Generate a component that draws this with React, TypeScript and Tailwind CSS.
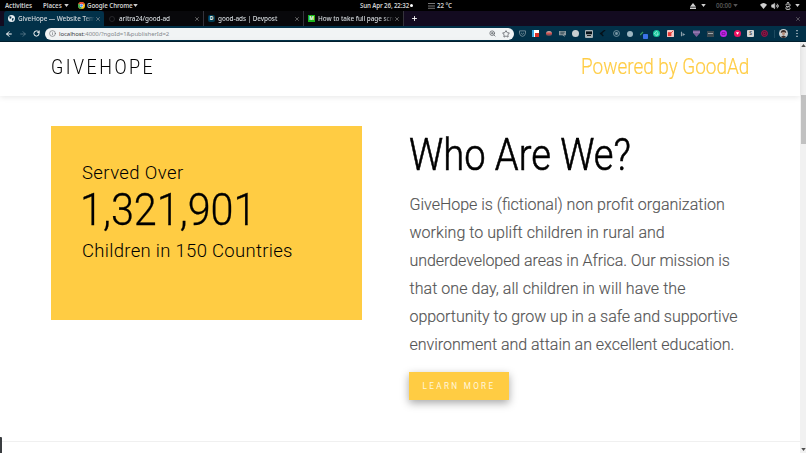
import React from "react";
import {
  ArrowLeft,
  ArrowRight,
  BatteryCharging,
  Info,
  Plus,
  RotateCw,
  Star,
  Volume2,
  X,
  ZoomIn,
} from "lucide-react";

const Caret = ({ className = "" }: { className?: string }) => (
  <svg viewBox="0 0 6 4" className={`h-[3px] w-[5px] shrink-0 fill-current ${className}`}>
    <path d="M0 0h6L3 4z" />
  </svg>
);

const ChromeLogo = () => (
  <svg viewBox="0 0 24 24" className="h-[7px] w-[7px] shrink-0">
    <circle cx="12" cy="12" r="12" fill="#fbc116" />
    <path d="M12 12 1.6 6A12 12 0 0 1 22.4 6z" fill="#ea4335" />
    <path d="M12 12 1.6 6A12 12 0 0 0 12 24z" fill="#34a853" />
    <circle cx="12" cy="12" r="5.6" fill="#fff" />
    <circle cx="12" cy="12" r="4.4" fill="#4285f4" />
  </svg>
);

const TopBar = () => (
  <div className="flex h-[11px] items-center bg-black text-[6.2px] leading-[9px] font-semibold whitespace-nowrap text-[#cfcfcf]">
    <div className="flex w-[360px] items-center pl-[5px]">
      <span className="w-[38px] tracking-[-0.05px]">Activities</span>
      <span className="w-[21px] tracking-[-0.05px]">Places</span>
      <Caret />
      <span className="w-[9px]" />
      <ChromeLogo />
      <span className="ml-[2px] w-[45px] tracking-[-0.1px]">Google Chrome</span>
      <Caret className="ml-px" />
    </div>
    <div className="flex flex-1 items-center">
      <span className="w-[50px] tracking-[-0.14px]">Sun Apr 26, 22:32</span>
      <span className="h-[3px] w-[3px] rounded-full bg-white" />
      <svg viewBox="0 0 7 6" className="ml-[15px] h-[6px] w-[7px] fill-[#777]">
        <path d="M0 0h7v1H0zM0 2.4h7v1H0zM0 4.8h7v1H0z" />
      </svg>
      <span className="ml-[2px] tracking-[-0.1px]">22 °C</span>
    </div>
    <div className="flex w-[118px] items-center">
      <svg viewBox="0 0 8 8" className="ml-[2px] h-[6px] w-[6px] fill-current">
        <path d="M4 0 8 5H0zM0 6h8v2H0z" />
      </svg>
      <Caret className="ml-[5px]" />
      <span className="ml-[10px] w-[17px] text-[#555] tracking-[-0.1px]">00:00</span>
      <Caret className="text-[#555]" />
      <svg viewBox="0 0 12 10" className="ml-[22px] h-[6px] w-[7px] fill-current">
        <path d="M0 3Q6-3 12 3L6 10z" />
      </svg>
      <Volume2 size={8} className="ml-[4px]" fill="currentColor" />
      <BatteryCharging size={8} strokeWidth={3} className="ml-[5px] -rotate-90" />
      <Caret className="ml-[3px]" />
    </div>
  </div>
);

type TabProps = { title: string; icon: React.ReactNode; active?: boolean };

const Tab = ({ title, icon, active }: TabProps) => (
  <div
    className={`flex h-[15px] w-[100px] items-center pr-[3px] pl-[4px] ${
      active ? "rounded-t-[3px] bg-[#023149]" : "border-r border-[#35333b] bg-[#08080b]"
    }`}
  >
    {icon}
    <span className="ml-[3px] w-[77px] overflow-hidden mask-r-from-85% text-[6.4px] leading-[11px] font-medium tracking-[-0.06px] whitespace-nowrap text-[#d5dade]">
      {title}
    </span>
    <X size={6} className="ml-auto shrink-0 text-[#b5b5b5]" />
  </div>
);

const TabStrip = () => (
  <div className="flex h-[15px] items-center bg-[#130b20] pl-[4px]">
    <Tab
      active
      title="GiveHope — Website Tem"
      icon={
        <svg viewBox="0 0 8 8" className="h-[7px] w-[7px] shrink-0">
          <circle cx="4" cy="4" r="4" fill="#e8eef2" />
          <path d="M1.5 1.5 4 2 3.5 4 2 4.2zM4.5 4 6.5 3.5 6 6 4.5 6.5z" fill="#023149" />
        </svg>
      }
    />
    <Tab
      title="aritra24/good-ad"
      icon={<span className="mx-px h-[6px] w-[6px] shrink-0 rounded-full border border-[#26262a]" />}
    />
    <Tab
      title="good-ads | Devpost"
      icon={
        <span className="flex h-[7px] w-[7px] shrink-0 items-center justify-center rounded-[2px] bg-[#003e54] text-[5px] leading-[7px] font-bold text-white">
          D
        </span>
      }
    />
    <Tab
      title="How to take full page scre"
      icon={
        <span className="flex h-[7px] w-[7px] shrink-0 items-center justify-center bg-[#1cb31c] text-[5px] leading-[7px] font-bold text-white">
          M
        </span>
      }
    />
    <Plus size={7} strokeWidth={3} className="ml-[7px] text-white" />
    <X size={6} className="mr-[5px] ml-auto text-[#999]" />
  </div>
);

const extensions = [
  <svg viewBox="0 0 8 8" className="h-[7px] w-[7px] fill-none stroke-[#78909c]">
    <path d="M.6 1h6.8v2.6Q7 7 4 7.3 1 7 .6 3.6zM2.3 3.2 4 4.8l1.7-1.6" />
  </svg>,
  <span className="flex h-[7px] w-[7px] items-end justify-end bg-linear-to-r from-[#38a8e0] from-30% to-white to-30%">
    <span className="h-[4px] w-[4px] bg-[#d93025]" />
  </span>,
  <span className="h-[5px] w-[6px] rounded-full bg-linear-to-b from-[#aab0b4] via-[#d05050] to-[#445]" />,
  <svg viewBox="0 0 8 8" className="h-[7px] w-[7px]">
    <path d="M0 1h8v5H6l1 2-3-2H0z" fill="#8b989e" />
    <path d="M1.5 2.5h5M1.5 4.3h4" stroke="#2d4652" />
  </svg>,
  <span className="h-[7px] w-[7px] rounded-full bg-[#c8ced1]" />,
  <svg viewBox="0 0 8 8" className="h-[8px] w-[8px]">
    <rect width="8" height="8" rx="1" fill="#a7b1b6" />
    <path d="M1 1.4h6v2.8H1z" fill="#061118" />
    <path d="M2 5.5h4" stroke="#222" />
  </svg>,
  <svg viewBox="0 0 8 8" className="h-[7px] w-[7px]">
    <path d="M7 0 2 4l3 3M4 4H1" stroke="#041018" strokeWidth="1.5" fill="none" />
  </svg>,
  <svg viewBox="0 0 8 8" className="h-[7px] w-[7px] fill-none stroke-[#7d9aa8]">
    <circle cx="4" cy="4" r="3.4" />
    <circle cx="4" cy="4" r="1.3" fill="#7d9aa8" />
  </svg>,
  <span className="h-[6px] w-[6px] rounded-full bg-[#9db6c2]" />,
  <svg viewBox="0 0 10 10" className="mt-[3px] ml-[4px] h-[10px] w-[10px] shrink-0">
    <path d="m0 5 3-3" stroke="#3c9a62" strokeWidth="1.2" />
    <rect x="3" y="4" width="5" height="5" rx=".8" fill="#3b73e8" />
  </svg>,
  <svg viewBox="0 0 8 8" className="h-[7px] w-[7px]">
    <circle cx="4" cy="4" r="4" fill="#15c39a" />
    <path d="M5.6 2.8A2 2 0 1 0 6 4.4H4.4" stroke="#c9fff0" strokeWidth=".8" fill="none" />
  </svg>,
  <svg viewBox="0 0 8 8" className="h-[7px] w-[7px]">
    <rect width="8" height="8" rx="1" fill="#f3c9c7" />
    <path d="M1 2.5h4V7H1z" fill="#e53935" />
    <path d="m4 4 3-3" stroke="#e53935" />
  </svg>,
  <svg viewBox="0 0 8 8" className="h-[6px] w-[6px]">
    <path d="M2 1v6" stroke="#8ca0ab" strokeWidth="1.6" />
    <path d="M3.5 2.5 7 4.5 3.5 6.5z" fill="#8ca0ab" />
  </svg>,
  <svg viewBox="0 0 8 8" className="h-[7px] w-[7px]">
    <path d="M0 .5h8v3L4 8 0 3.5z" fill="#7a5f98" />
    <path d="M0 2.5h8" stroke="#a58ac0" />
  </svg>,
  <span className="flex h-[6px] w-[7px] items-center justify-center bg-[#3d4a52]">
    <span className="h-px w-[5px] bg-[#a0a8ac]" />
  </span>,
  <svg viewBox="0 0 8 8" className="h-[7px] w-[7px]">
    <circle cx="4" cy="4" r="4" fill="#c026e8" />
    <path d="M2.3 3h3.4v2.2H2.3z" stroke="#6b118a" fill="none" strokeWidth=".8" />
  </svg>,
  <svg viewBox="0 0 8 8" className="h-[7px] w-[7px]">
    <circle cx="4" cy="4" r="4" fill="#ee1261" />
    <path d="m2.2 2.5 1.8 3 1.8-3z" fill="#fff" />
  </svg>,
  <span className="flex h-[7px] w-[7px] items-center justify-center rounded-[1px] bg-[#d4d4d4] text-[5px] leading-[7px] font-bold text-[#555]">
    S
  </span>,
  <svg viewBox="0 0 8 8" className="h-[7px] w-[7px] fill-[#4a1236] stroke-[#b3174b]">
    <circle cx="4" cy="4" r="3.4" />
    <circle cx="4" cy="4" r="1.4" />
  </svg>,
];

const Toolbar = () => (
  <div className="flex h-[16px] items-center border-b border-[#02202f] bg-[#023149] text-white">
    <ArrowLeft size={8} strokeWidth={3} className="ml-[5px]" />
    <ArrowRight size={8} className="ml-[6px] text-[#6d8a99]" />
    <RotateCw size={7} strokeWidth={3.4} className="ml-[6px]" />
    <div className="ml-[5px] flex h-[12px] w-[469px] items-center rounded-full bg-[#f1f4f5] pr-[4px] pl-[4px] text-[#5f6368]">
      <Info size={7} />
      <span className="ml-[3px] text-[6px] leading-[10px] tracking-[-0.07px] text-[#85898d]">
        <span className="text-[#3c4043]">localhost</span>:4000/?ngoId=1&amp;publisherId=2
      </span>
      <ZoomIn size={7} strokeWidth={2.6} className="ml-auto" />
      <Star size={8} strokeWidth={2.6} className="ml-[6px]" />
    </div>
    <div className="ml-[1.5px] flex">
      {extensions.map((icon, i) => (
        <span key={i} className="flex h-[11px] w-[13.45px] items-center justify-center">
          {icon}
        </span>
      ))}
    </div>
    <span className="ml-[3px] h-[8px] w-px bg-[#1c4a60]" />
    <svg viewBox="0 0 10 10" className="ml-[4px] h-[9px] w-[9px]">
      <circle cx="5" cy="5" r="5" fill="#c9cdd0" />
      <path d="M2 4.5Q2 1 5 1t3 3.5L6.5 4h-3zM2 9q3-3.5 6 0-3 2-6 0z" fill="#3c2d2a" />
      <path d="M3.5 4h3v2q-1.5 1.6-3 0z" fill="#b98d78" />
    </svg>
    <svg viewBox="0 0 2 8" className="mr-[8px] ml-auto h-[7px] w-[2px] fill-[#d5dfe4]">
      <path d="M.3 0h1.4v1.4H.3zM.3 3.3h1.4v1.4H.3zM.3 6.6h1.4V8H.3z" />
    </svg>
  </div>
);

const Navbar = () => (
  <header className="flex h-[54px] shrink-0 items-center justify-between bg-white pr-[51px] pb-[3px] pl-[51px] shadow-[0_1px_6px_rgba(0,0,0,0.1)]">
    <span className="w-[110px] text-[19.5px] leading-[50px] text-black">
      <span className="inline-block origin-left scale-x-[0.92] tracking-[2.7px]">GIVEHOPE</span>
    </span>
    <span className="w-[168px] pb-px text-[22px] leading-[50px] whitespace-nowrap text-[#ffcc43]">
      <span className="inline-block origin-left scale-x-[0.86] [-webkit-text-stroke:0.2px]">
        Powered by GoodAd
      </span>
    </span>
  </header>
);

const Counter = () => (
  <div className="ml-[0.5px] h-[193.5px] w-[311.5px] bg-[#ffcc43] pt-[35px] pl-[31.5px] whitespace-nowrap text-black">
    <p className="text-[18.5px] leading-[25px] tracking-[0.4px]">Served Over</p>
    <p className="-ml-[2px] origin-left scale-x-[0.94] text-[44px] leading-[48px] [-webkit-text-stroke:0.3px]">
      1,321,901
    </p>
    <p className="text-[18.5px] leading-[35px] tracking-[0.3px]">Children in 150 Countries</p>
  </div>
);

const About = () => (
  <div className="w-[345px] whitespace-nowrap">
    <h2 className="-ml-px origin-left scale-x-[0.867] text-[44px] leading-[60px] text-black [-webkit-text-stroke:0.6px]">
      Who Are We?
    </h2>
    <p className="mt-[6px] text-[16px] leading-[28.1px] text-[#555] [-webkit-text-stroke:0.15px]">
      <span>GiveHope is (fictional) non profit organization</span>
      <br />
      <span className="tracking-[0.04px]">working to uplift children in rural and</span>
      <br />
      <span className="tracking-[-0.06px]">underdeveloped areas in Africa. Our mission is</span>
      <br />
      <span className="tracking-[0.05px]">that one day, all children in will have the</span>
      <br />
      <span className="tracking-[-0.04px]">opportunity to grow up in a safe and supportive</span>
      <br />
      <span className="tracking-[-0.02px]">environment and attain an excellent education.</span>
    </p>
    <button className="mt-[12.5px] -ml-[0.5px] block h-[28px] w-[100px] bg-[#ffcc43] text-[8.2px] font-normal tracking-[2.3px] text-[#fff6dc] shadow-[0_3px_9px_rgba(0,0,0,0.35)]">
      LEARN MORE
    </button>
  </div>
);

const Scrollbar = () => (
  <div className="flex w-[6px] flex-col items-center bg-[#f1f1f1] text-[#505050]">
    <Caret className="mt-[2px] w-[3px] rotate-180" />
    <div className="mt-[48px] h-[49px] w-[5px] bg-[#c1c1c1]" />
    <Caret className="mt-auto mb-[2px] w-[3px]" />
  </div>
);

export default function App() {
  return (
    <div className="flex h-[453px] w-[806px] flex-col overflow-hidden bg-white">
      <div className="font-['Noto_Sans',sans-serif]">
        <TopBar />
        <TabStrip />
        <Toolbar />
      </div>
      <div className="flex flex-1 font-['Roboto',sans-serif] font-light">
        <main className="relative flex flex-1 flex-col">
          <Navbar />
          <section className="flex h-[346px] items-start border-b border-[#f0f0f0] pt-[30px] pl-[50px]">
            <Counter />
            <div className="-mt-px ml-[47.5px]">
              <About />
            </div>
          </section>
          <div className="absolute bottom-0 left-0 h-[16px] w-[2px] rounded-tr-[1px] bg-[#3a3d40]" />
        </main>
        <Scrollbar />
      </div>
    </div>
  );
}
